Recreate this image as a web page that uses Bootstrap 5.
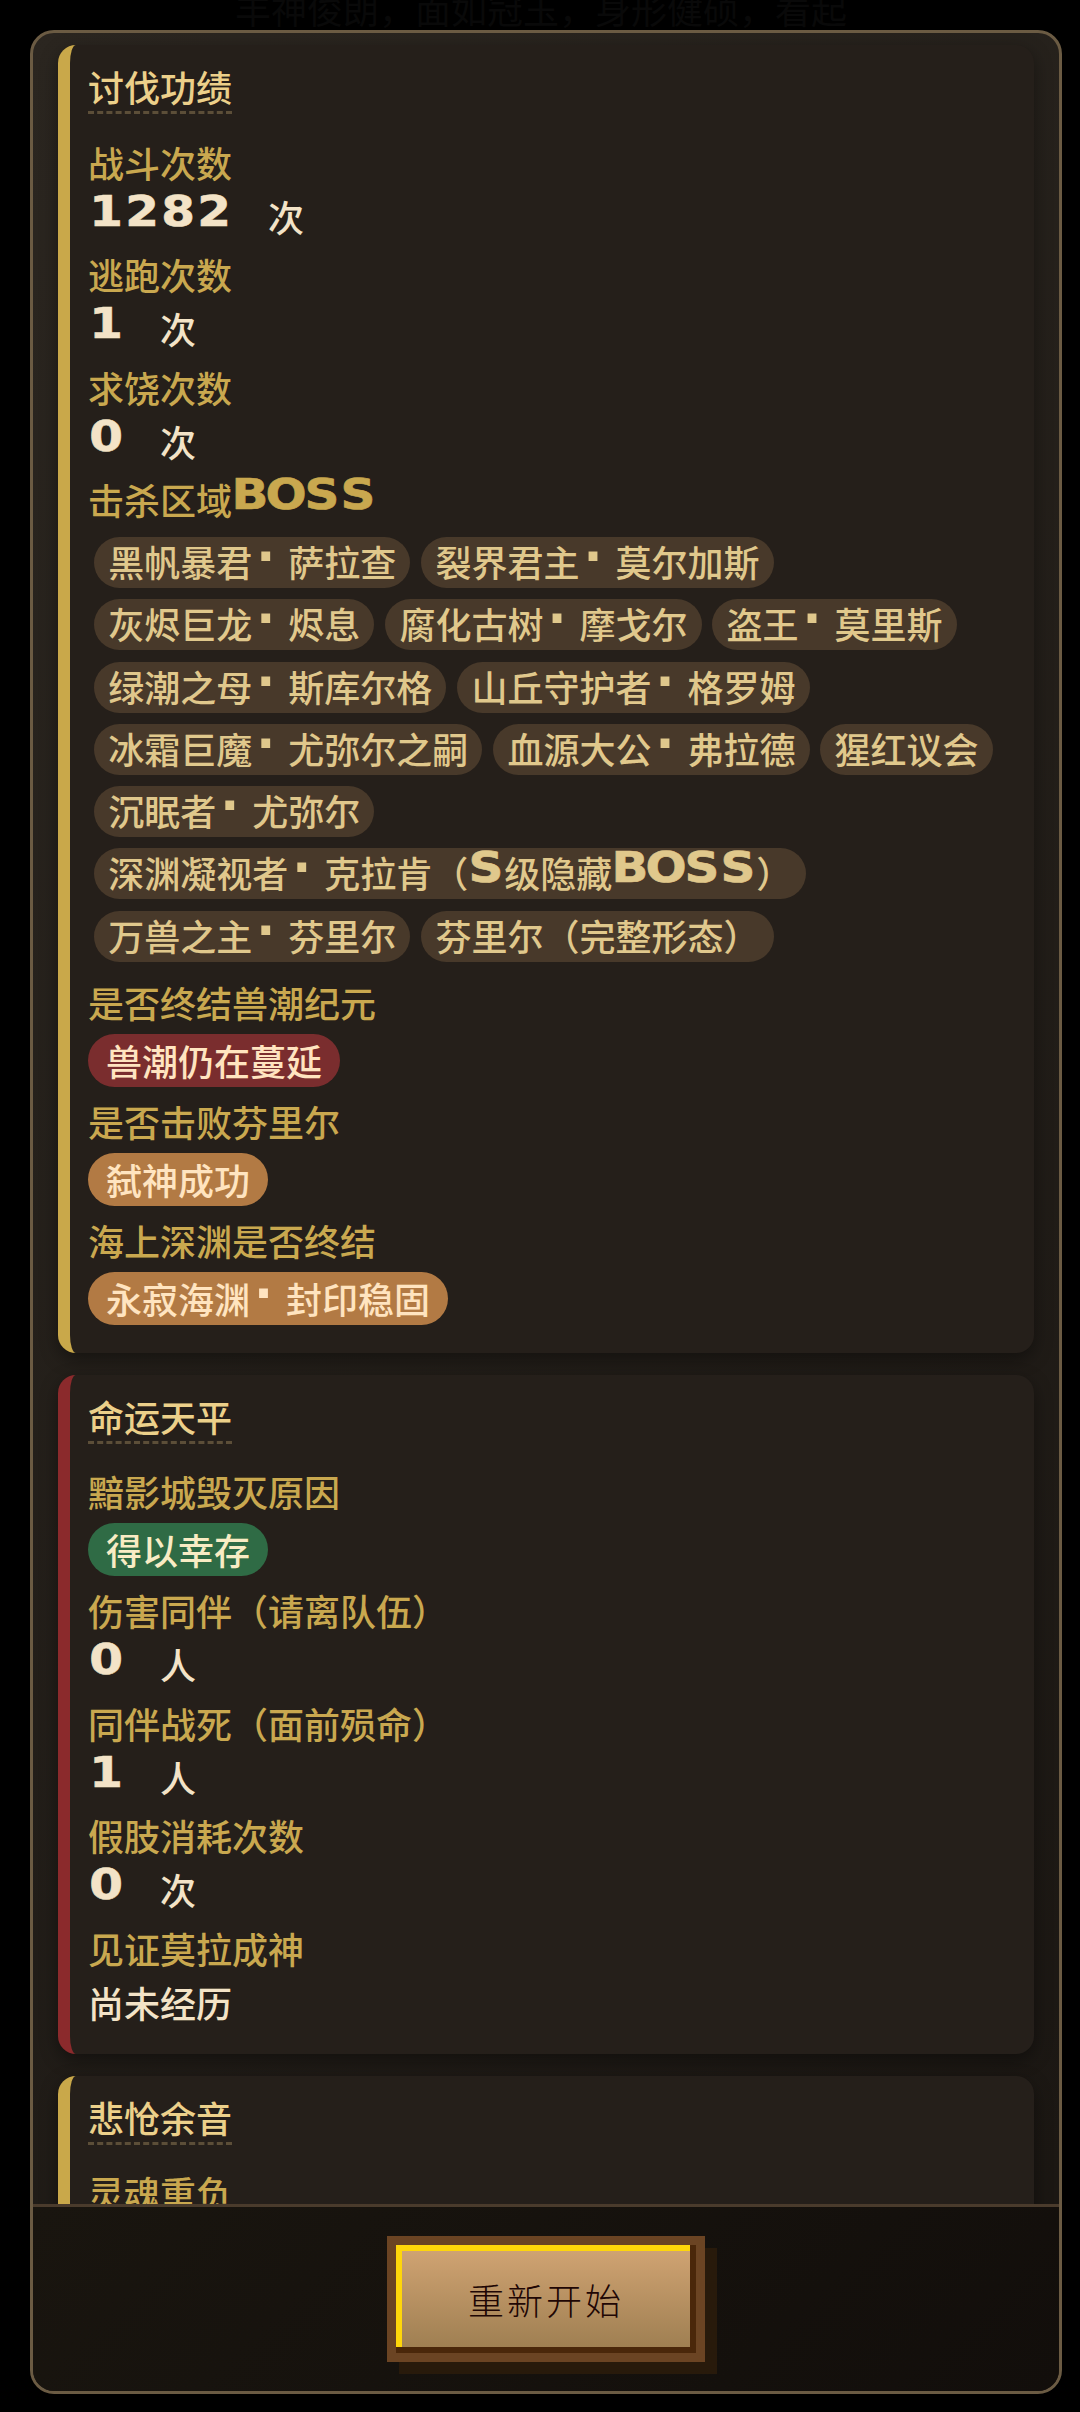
<!DOCTYPE html>
<html lang="zh-CN">
<head>
<meta charset="utf-8">
<meta name="viewport" content="width=device-width, initial-scale=1">
<title>结局总览</title>
<link rel="stylesheet" href="https://cdn.jsdelivr.net/npm/bootstrap@5.3.0/dist/css/bootstrap.min.css">
<style>
  html, body { height: 2412px; overflow: hidden; }
  body {
    background: #000;
    font-family: "Noto Sans CJK SC", "Noto Sans", sans-serif;
    font-size: 36px; line-height: 54px; font-weight: 500;
    color: #f3e3c7;
  }
  .story-line { top: -19px; left: 235px; color: #090909; line-height: 54px; font-weight: 400; }
  .stage { padding: 30px 18px 18px 30px; height: 2412px; }
  .dialog-box {
    border: 3px solid #6b5b43; border-radius: 24px;
    background: linear-gradient(135deg, #2b2620 0%, #1a1612 100%);
  }
  .dialog-scroll { padding: 12px 25px 0; gap: 21.5px; min-height: 0; }
  .chapter {
    border-left: 12px solid #c9a84a; border-radius: 18px;
    background: #251f1a; padding: 18px 18px 21px;
    box-shadow: 0 6px 18px rgba(0,0,0,.4);
  }
  .chapter-red { border-left-color: #8b2a2c; }
  .chapter-title {
    color: #ecd08a; font-size: 36px; line-height: 46px; padding-bottom: 2px; font-weight: 500;
    border-bottom: 3px dashed #5c4e38; margin-bottom: 20.5px;
  }
  .entry { margin-bottom: 4.5px; }
  .entry-name { color: #c9a84f; }
  .pix {
    display: inline-block; font-family: "DejaVu Sans", sans-serif; font-weight: 700;
    font-size: 42.5px; line-height: 1; height: 0; white-space: nowrap; position: relative; top: -6px;
  }
  .pix b {
    display: inline-block; width: 36px; text-align: center; line-height: 0; font-weight: 700;
    transform: scaleX(1.14); -webkit-text-stroke: .6px currentColor;
  }
  .dot {
    display: inline-block; width: 36px; padding-left: 4px; font-family: "DejaVu Sans", sans-serif;
    font-weight: 700; font-size: 50px; line-height: 0; position: relative; top: -3px;
  }
  .boss-list { gap: 11.3px 10.8px; padding: 11px 0 9px 6px; }
  .boss { background: #48392a; color: #e0c88c; border-radius: 26px; padding: 0 14.2px; height: 51px; line-height: 48px; }
  .fate { border-radius: 27px; padding: 0 18px; height: 53px; line-height: 53px; margin: 4.5px 0 3px; color: #ffe4c0; }
  .fate-red { background: #7a2d2e; }
  .fate-bronze { background: #b27a44; }
  .fate-green { background: #2f6b45; color: #f8ecc4; }
  .dialog-foot {
    border-top: 3px solid #4a3b2c; height: 187px; padding-top: 29px;
    background: linear-gradient(135deg, #19150f, #120e0b); border-radius: 0 0 21px 21px;
  }
  .restart.btn {
    width: 318px; height: 126px; border: 9px solid #6b4423;
    background: linear-gradient(#d2a574, #9c7d50); color: #200604; font-weight: 300; letter-spacing: 3px;
    font-size: 36px; line-height: 54px;
    box-shadow: inset -6px -6px 0 #4a270a, inset 6px 6px 0 #ffd60a, 12px 12px 0 #281a0b;
  }
</style>
</head>
<body>
<div class="story-line position-absolute text-nowrap">丰神俊朗，面如冠玉，身形健硕，看起</div>
<main class="stage position-relative">
  <div class="dialog-box d-flex flex-column h-100">
    <div class="dialog-scroll d-flex flex-column flex-grow-1 overflow-hidden">

      <section class="chapter flex-shrink-0">
        <h2 class="chapter-title d-table">讨伐功绩</h2>
        <div class="entry"><div class="entry-name">战斗次数</div><div><span class="pix"><b>1</b><b>2</b><b>8</b><b>2</b></span><span>　次</span></div></div>
        <div class="entry"><div class="entry-name">逃跑次数</div><div><span class="pix"><b>1</b></span><span>　次</span></div></div>
        <div class="entry"><div class="entry-name">求饶次数</div><div><span class="pix"><b>0</b></span><span>　次</span></div></div>
        <div class="entry">
          <div class="entry-name">击杀区域<span class="pix"><b>B</b><b>O</b><b>S</b><b>S</b></span></div>
          <div class="boss-list d-flex flex-wrap">
            <span class="boss">黑帆暴君<span class="dot">·</span>萨拉查</span>
            <span class="boss">裂界君主<span class="dot">·</span>莫尔加斯</span>
            <span class="boss">灰烬巨龙<span class="dot">·</span>烬息</span>
            <span class="boss">腐化古树<span class="dot">·</span>摩戈尔</span>
            <span class="boss">盗王<span class="dot">·</span>莫里斯</span>
            <span class="boss">绿潮之母<span class="dot">·</span>斯库尔格</span>
            <span class="boss">山丘守护者<span class="dot">·</span>格罗姆</span>
            <span class="boss">冰霜巨魔<span class="dot">·</span>尤弥尔之嗣</span>
            <span class="boss">血源大公<span class="dot">·</span>弗拉德</span>
            <span class="boss">猩红议会</span>
            <span class="boss">沉眠者<span class="dot">·</span>尤弥尔</span>
            <span class="boss">深渊凝视者<span class="dot">·</span>克拉肯（<span class="pix"><b>S</b></span>级隐藏<span class="pix"><b>B</b><b>O</b><b>S</b><b>S</b></span>）</span>
            <span class="boss">万兽之主<span class="dot">·</span>芬里尔</span>
            <span class="boss">芬里尔（完整形态）</span>
          </div>
        </div>
        <div class="entry d-flex flex-column align-items-start"><div class="entry-name">是否终结兽潮纪元</div><span class="fate fate-red">兽潮仍在蔓延</span></div>
        <div class="entry d-flex flex-column align-items-start"><div class="entry-name">是否击败芬里尔</div><span class="fate fate-bronze">弑神成功</span></div>
        <div class="entry d-flex flex-column align-items-start"><div class="entry-name">海上深渊是否终结</div><span class="fate fate-bronze">永寂海渊<span class="dot">·</span>封印稳固</span></div>
      </section>

      <section class="chapter chapter-red flex-shrink-0">
        <h2 class="chapter-title d-table">命运天平</h2>
        <div class="entry d-flex flex-column align-items-start"><div class="entry-name">黯影城毁灭原因</div><span class="fate fate-green">得以幸存</span></div>
        <div class="entry"><div class="entry-name">伤害同伴（请离队伍）</div><div><span class="pix"><b>0</b></span><span>　人</span></div></div>
        <div class="entry"><div class="entry-name">同伴战死（面前殒命）</div><div><span class="pix"><b>1</b></span><span>　人</span></div></div>
        <div class="entry"><div class="entry-name">假肢消耗次数</div><div><span class="pix"><b>0</b></span><span>　次</span></div></div>
        <div class="entry"><div class="entry-name">见证莫拉成神</div><div>尚未经历</div></div>
      </section>

      <section class="chapter flex-shrink-0">
        <h2 class="chapter-title d-table">悲怆余音</h2>
        <div class="entry"><div class="entry-name">灵魂重负</div></div>
      </section>
    </div>

    <footer class="dialog-foot flex-shrink-0 d-flex justify-content-center align-items-start">
      <button type="button" class="restart btn rounded-0 p-0">重新开始</button>
    </footer>
  </div>
</main>
<script src="https://cdn.jsdelivr.net/npm/bootstrap@5.3.0/dist/js/bootstrap.bundle.min.js"></script>
</body>
</html>
